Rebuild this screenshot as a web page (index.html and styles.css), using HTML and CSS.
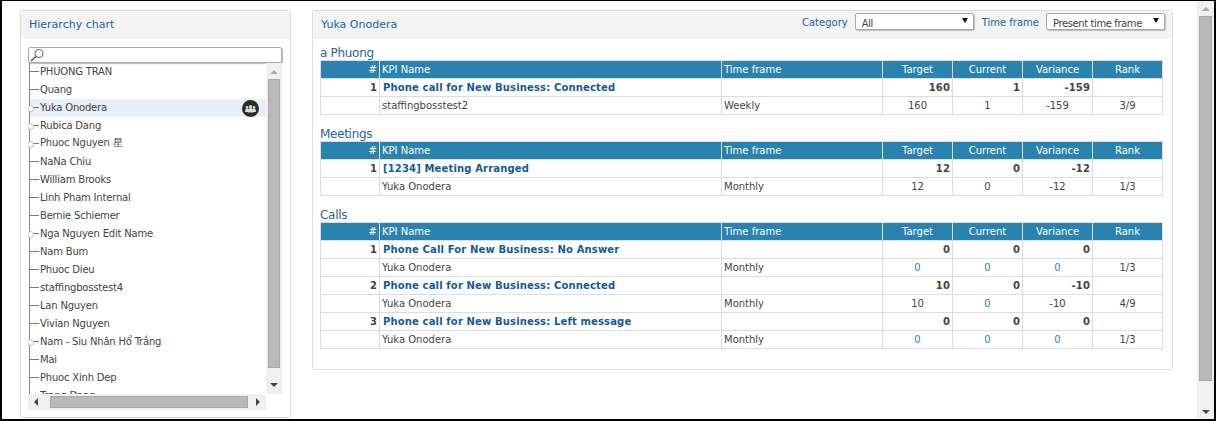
FILE: index.html
```html
<!DOCTYPE html>
<html lang="en">
<head>
<meta charset="utf-8">
<title>Hierarchy chart</title>
<link rel="stylesheet" href="styles.css">
</head>
<body>
<div class="frame">
  <div class="page">
    <div class="columns">
      <section class="panel left">
        <header class="panel-head"><span class="title">Hierarchy chart</span></header>
        <div class="left-body">
          <div class="search">
            <svg class="lens" width="16" height="14" viewBox="0 0 16 14"><circle cx="10" cy="5.5" r="4" fill="none" stroke="#777" stroke-width="1.2"/><path d="M7 8.500 2 13" stroke="#555" stroke-width="1.6"/></svg>
          </div>
          <div class="tree-wrap">
            <div class="tree-view">
              <ul class="tree">
                <li class="item"><span class="stub"></span>PHUONG TRAN</li>
                <li class="item"><span class="stub"></span>Quang</li>
                <li class="item knob selected"><span class="stub"></span>Yuka Onodera
                  <svg class="team" width="17" height="17" viewBox="0 0 17 17"><circle cx="8.500" cy="8.500" r="8.500" fill="#2b2b2b"/><g fill="#ddd"><circle cx="5" cy="7.400" r="1.300"/><circle cx="12" cy="7.400" r="1.300"/><circle cx="8.500" cy="6.600" r="1.600"/><path d="M3 12c0-2.400 1-3.400 2-3.400s2 1 2 3.400zM10 12c0-2.400 1-3.400 2-3.400s2 1 2 3.400z"/><path d="M5.500 12.400c0-3 1.500-4.400 3-4.400s3 1.400 3 4.400z"/></g></svg>
                </li>
                <li class="item knob"><span class="stub"></span>Rubica Dang</li>
                <li class="item knob"><span class="stub"></span>Phuoc Nguyen 星</li>
                <li class="item"><span class="stub"></span>NaNa Chiu</li>
                <li class="item"><span class="stub"></span>William Brooks</li>
                <li class="item"><span class="stub"></span>Linh Pham Internal</li>
                <li class="item"><span class="stub"></span>Bernie Schiemer</li>
                <li class="item knob"><span class="stub"></span>Nga Nguyen Edit Name</li>
                <li class="item"><span class="stub"></span>Nam Bum</li>
                <li class="item"><span class="stub"></span>Phuoc Dieu</li>
                <li class="item"><span class="stub"></span>staffingbosstest4</li>
                <li class="item"><span class="stub"></span>Lan Nguyen</li>
                <li class="item"><span class="stub"></span>Vivian Nguyen</li>
                <li class="item knob"><span class="stub"></span>Nam - Siu Nhân Hổ Trắng</li>
                <li class="item"><span class="stub"></span>Mai</li>
                <li class="item"><span class="stub"></span>Phuoc Xinh Dep</li>
                <li class="item"><span class="stub"></span>Trang Dang</li>
              </ul>
            </div>
            <div class="vbar small">
              <span class="arrow up"></span>
              <span class="thumb"></span>
              <span class="arrow down"></span>
            </div>
            <div class="hbar">
              <span class="arrow lft"></span>
              <span class="hthumb"></span>
              <span class="arrow rgt"></span>
            </div>
          </div>
        </div>
      </section>

      <section class="panel right">
        <header class="panel-head split">
          <span class="title">Yuka Onodera</span>
          <div class="filters">
            <label class="flabel">Category</label>
            <div class="select cat"><span>All</span><i class="caret"></i></div>
            <label class="flabel">Time frame</label>
            <div class="select tf"><span>Present time frame</span><i class="caret"></i></div>
          </div>
        </header>
        <div class="right-body">
          <h3 class="group">a Phuong</h3>
          <table class="kpi">
            <colgroup><col class="c1"><col class="c2"><col class="c3"><col class="c4"><col class="c5"><col class="c6"><col class="c7"></colgroup>
            <thead><tr><th class="num">#</th><th class="lft-text">KPI Name</th><th class="lft-text">Time frame</th><th>Target</th><th>Current</th><th>Variance</th><th>Rank</th></tr></thead>
            <tbody>
              <tr class="sum"><td class="num">1</td><td class="name">Phone call for New Business: Connected</td><td></td><td class="num">160</td><td class="num">1</td><td class="num">-159</td><td></td></tr>
              <tr><td></td><td>staffingbosstest2</td><td>Weekly</td><td class="mid">160</td><td class="mid">1</td><td class="mid">-159</td><td class="mid">3/9</td></tr>
            </tbody>
          </table>
          <h3 class="group">Meetings</h3>
          <table class="kpi">
            <colgroup><col class="c1"><col class="c2"><col class="c3"><col class="c4"><col class="c5"><col class="c6"><col class="c7"></colgroup>
            <thead><tr><th class="num">#</th><th class="lft-text">KPI Name</th><th class="lft-text">Time frame</th><th>Target</th><th>Current</th><th>Variance</th><th>Rank</th></tr></thead>
            <tbody>
              <tr class="sum"><td class="num">1</td><td class="name">[1234] Meeting Arranged</td><td></td><td class="num">12</td><td class="num">0</td><td class="num">-12</td><td></td></tr>
              <tr><td></td><td>Yuka Onodera</td><td>Monthly</td><td class="mid">12</td><td class="mid">0</td><td class="mid">-12</td><td class="mid">1/3</td></tr>
            </tbody>
          </table>
          <h3 class="group">Calls</h3>
          <table class="kpi">
            <colgroup><col class="c1"><col class="c2"><col class="c3"><col class="c4"><col class="c5"><col class="c6"><col class="c7"></colgroup>
            <thead><tr><th class="num">#</th><th class="lft-text">KPI Name</th><th class="lft-text">Time frame</th><th>Target</th><th>Current</th><th>Variance</th><th>Rank</th></tr></thead>
            <tbody>
              <tr class="sum"><td class="num">1</td><td class="name">Phone Call For New Business: No Answer</td><td></td><td class="num">0</td><td class="num">0</td><td class="num">0</td><td></td></tr>
              <tr><td></td><td>Yuka Onodera</td><td>Monthly</td><td class="mid link">0</td><td class="mid link">0</td><td class="mid link">0</td><td class="mid">1/3</td></tr>
              <tr class="sum"><td class="num">2</td><td class="name">Phone call for New Business: Connected</td><td></td><td class="num">10</td><td class="num">0</td><td class="num">-10</td><td></td></tr>
              <tr><td></td><td>Yuka Onodera</td><td>Monthly</td><td class="mid">10</td><td class="mid link">0</td><td class="mid">-10</td><td class="mid">4/9</td></tr>
              <tr class="sum"><td class="num">3</td><td class="name">Phone call for New Business: Left message</td><td></td><td class="num">0</td><td class="num">0</td><td class="num">0</td><td></td></tr>
              <tr><td></td><td>Yuka Onodera</td><td>Monthly</td><td class="mid link">0</td><td class="mid link">0</td><td class="mid link">0</td><td class="mid">1/3</td></tr>
            </tbody>
          </table>
        </div>
      </section>
    </div>
    <div class="vbar page-bar">
      <span class="arrow up"></span>
      <span class="thumb"></span>
      <span class="arrow down"></span>
    </div>
  </div>
</div>
</body>
</html>
```

FILE: styles.css
```css
* { box-sizing: border-box; }
html, body { margin: 0; padding: 0; height: 100%; overflow: hidden; }
body { font-family: "DejaVu Sans", Verdana, sans-serif; font-size: 10px; color: #444; background: #000; }
.frame { height: 421px; padding: 1px 2px 2px 2px; }
.page { height: 418px; background: #fff; display: flex; overflow: hidden; }
.columns { flex: 1; display: flex; align-items: flex-start; padding: 9px 0 0 18px; gap: 21px; }

.panel { background: #fff; border: 1px solid #ddd; border-radius: 3px; }
.panel-head { height: 28px; background: #f4f4f4; display: flex; align-items: center; padding: 0 8px 2px; }
.title { color: #22629e; font-size: 11px; }

.left { width: 271px; height: 408px; }
.left-body { padding: 8px 7px 0; }
.search { width: 254px; height: 16px; border: 1px solid #aaa; border-radius: 2px; box-shadow: 1px 1px 1px #bbb; display: flex; align-items: center; }
.lens { display: block; }

.tree-wrap { display: grid; grid-template-columns: 238px 16px; grid-template-rows: 331px 16px; }
.tree-view { overflow: hidden; }
.tree { list-style: none; margin: 0 0 0 1px; padding: 0; border-left: 1px solid #888; }
.item { height: 18px; display: flex; align-items: center; padding-bottom: 2px; position: relative; color: #444; font-size: 10px; letter-spacing: -.2px; white-space: nowrap; }
.stub { display: inline-block; width: 9px; height: 1px; background: #777; margin-right: 1px; }
.selected { background: #e8eff8; }
.knob::before { content: ""; position: absolute; left: -3px; top: 6px; width: 5px; height: 5px; border: 1px solid #bbb; border-radius: 50%; background: #fff; }
.team { position: absolute; right: 7px; top: 1px; }

.vbar { background: #f0f0f0; display: flex; flex-direction: column; align-items: center; }
.small { width: 16px; padding: 0 2px; }
.small .thumb { height: 289px; }
.thumb { display: block; width: 12px; background: #b9b9b9; border: 1px solid #a8a8a8; }
.arrow { display: block; width: 0; height: 0; border-style: solid; }
.up { border-width: 0 4px 4px; border-color: transparent transparent #a8a8a8; margin: 7px 0 5px; }
.down { border-width: 4px 4px 0; border-color: #444 transparent transparent; margin-top: 15px; }
.hbar { background: #f0f0f0; display: flex; align-items: center; padding: 0 0 0 6px; }
.hthumb { display: block; width: 198px; height: 12px; background: #b9b9b9; border: 1px solid #a8a8a8; margin: 0 8px 0 12px; }
.lft { border-width: 4px 4px 4px 0; border-color: transparent #444 transparent transparent; }
.rgt { border-width: 4px 0 4px 4px; border-color: transparent transparent transparent #444; }

.right { width: 861px; height: 360px; }
.split { justify-content: space-between; padding-right: 7px; }
.filters { display: flex; align-items: flex-start; align-self: flex-start; padding-top: 2px; }
.flabel { color: #22629e; font-size: 10px; line-height: 19px; margin-right: 7px; }
.select { height: 17px; width: 119px; border: 1px solid #aaa; border-radius: 2px; background: #fff; box-shadow: 1px 1px 1px #bbb; display: flex; align-items: center; justify-content: space-between; padding: 3px 5px 0 6px; font-size: 10px; letter-spacing: -.4px; color: #444; }
.cat { margin-right: 8px; }
.caret { display: block; width: 0; height: 0; border-style: solid; border-width: 5px 3px 0; border-color: #111 transparent transparent; margin-top: -5px; }

.right-body { padding: 7px 9px 0 7px; }
.group { margin: 0; height: 14px; line-height: 14px; font-size: 12px; font-weight: 400; letter-spacing: -.3px; color: #2a6694; }
.kpi { width: 842px; table-layout: fixed; border-collapse: collapse; margin-bottom: 12px; font-size: 10px; }
.c1 { width: 59px; } .c2 { width: 342px; } .c3 { width: 161px; } .c4 { width: 70px; } .c5 { width: 70px; } .c6 { width: 70px; } .c7 { width: 70px; }
.kpi th, .kpi td { border: 1px solid #ddd; height: 18px; padding: 0 2px; white-space: nowrap; overflow: hidden; }
.kpi th { background: #2a83ae; color: #fff; font-weight: 400; text-align: center; }
.kpi th.lft-text { text-align: left; }
.kpi th.num, .kpi td.num { text-align: right; }
.sum td { font-weight: 700; font-size: 10px; color: #444; letter-spacing: .15px; }
.sum td.name { color: #135a97; padding-left: 3px; }
.mid { text-align: center; }
.link { color: #2a7fb8; }

.page-bar { width: 17px; }
.page-bar .up { margin: 6px 0 5px; }
.page-bar .thumb { width: 13px; height: 365px; }
.page-bar .down { margin-top: 29px; }
```
